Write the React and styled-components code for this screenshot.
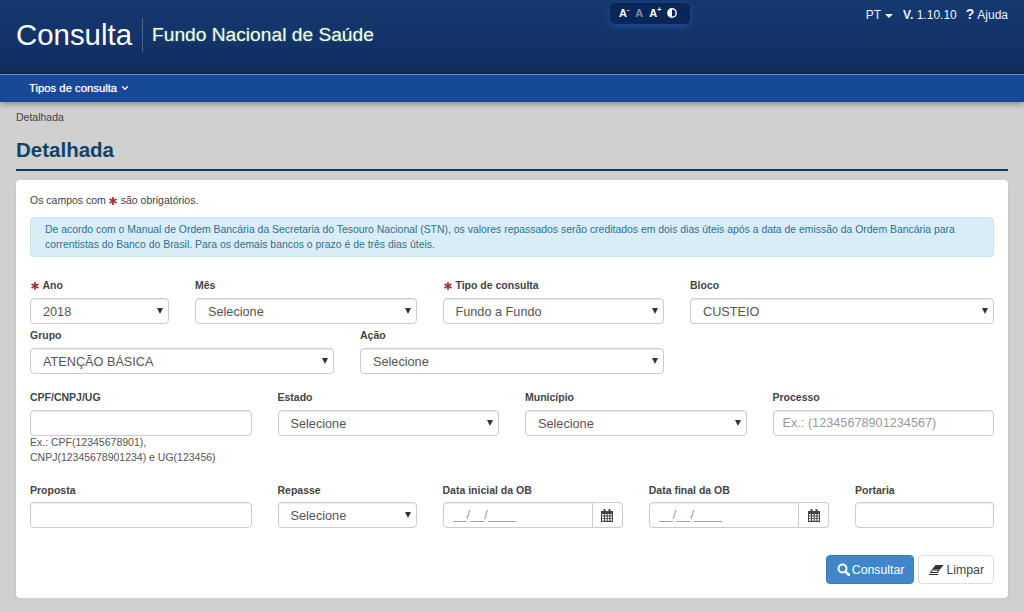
import styled, { createGlobalStyle } from 'styled-components';
import { ChevronDown } from 'lucide-react';

const GlobalStyle = createGlobalStyle`
  * { box-sizing: border-box; }
  html, body { margin: 0; padding: 0; }
  body {
    background: #d0d0d0;
    font-family: "Liberation Sans", Arial, sans-serif;
    font-size: 12px;
    color: #333;
    overflow: hidden;
  }
`;

const Header = styled.header`
  height: 74px;
  padding: 0 16px;
  display: flex;
  align-items: flex-start;
  background: linear-gradient(#15396f, #133268 60%, #102a5a);
  color: #fff;
`;

const Brand = styled.div`
  width: 594px;
  height: 74px;
  display: flex;
  align-items: center;
  padding-bottom: 4px;
`;

const AppName = styled.div`
  font-size: 29.4px;
  line-height: 34px;
  padding-right: 10px;
  margin-right: 9px;
  border-right: 1px solid #47658f;
`;

const AppSubtitle = styled.div`
  font-size: 19.2px;
  color: #f2fff2;
  text-shadow: 0 0 2px rgba(120, 200, 120, 0.6);
`;

const FontTools = styled.div`
  margin-top: 3px;
  width: 80px;
  height: 21px;
  padding: 0 9px 2px;
  display: flex;
  align-items: center;
  gap: 6px;
  border-radius: 5px;
  background: #0a2558;
  box-shadow: 0 2px 7px rgba(40, 90, 170, 0.7);
  font-size: 11px;
  font-weight: bold;
`;

const FontTool = styled.span`
  color: ${props => (props.$muted ? '#7f8fae' : '#fff')};
  sup {
    font-size: 7px;
    line-height: 0;
  }
`;

const TopLinks = styled.div`
  margin-left: auto;
  height: 30px;
  display: flex;
  align-items: center;
  font-size: 12px;
  color: #eef3fb;
`;

const Caret = styled.span`
  display: inline-block;
  margin: 2px 11px 0 4px;
  border-top: 4px solid #eef3fb;
  border-left: 4px solid transparent;
  border-right: 4px solid transparent;
`;

const Version = styled.span`
  margin-right: 9px;
  margin-left: -1px;
  b { font-weight: bold; }
`;

const HelpMark = styled.b`
  font-size: 14px;
  margin: -3px 3px 0 0;
`;

const Nav = styled.nav`
  height: 28px;
  padding: 0 29px 2px;
  display: flex;
  align-items: center;
  gap: 3px;
  background: #174997;
  border-top: 1px solid #6395d6;
  box-shadow: 0 2px 6px rgba(0, 0, 0, 0.35);
  color: #fff;
  font-size: 11.3px;
  text-shadow: 0 0 1px rgba(255, 255, 255, 0.7);
  position: relative;
`;

const Page = styled.main`
  padding: 0 16px;
`;

const Breadcrumb = styled.div`
  padding-top: 9px;
  height: 33px;
  font-size: 10.5px;
  line-height: 12px;
  color: #444;
`;

const Title = styled.h1`
  margin: 0 0 9px;
  height: 36px;
  font-size: 20.5px;
  line-height: 30px;
  font-weight: bold;
  color: #0f4468;
  border-bottom: 2px solid #12385f;
`;

const Card = styled.section`
  height: 418px;
  padding: 13px 14px;
  background: #fff;
  border-radius: 4px;
  box-shadow: 0 1px 2px rgba(0, 0, 0, 0.15);
`;

const Notice = styled.p`
  margin: 0 0 10px;
  font-size: 10.5px;
  line-height: 14px;
  color: #444;
`;

const StarMark = styled.svg`
  display: inline-block;
  width: 8px;
  height: 8px;
  vertical-align: -1px;
  margin: 0 1px 0 ${props => (props.$label ? '1px' : '0')};
  stroke: #a5323a;
  stroke-width: 1.7;
`;

const InfoAlert = styled.div`
  height: 40px;
  margin-bottom: 20px;
  padding: 4px 14px;
  background: #d9edf7;
  border: 1px solid #c8e5f2;
  border-radius: 4px;
  font-size: 10.43px;
  line-height: 15px;
  color: #31708f;
`;

const Row = styled.div`
  display: flex;
  margin: 0 -13px ${props => props.$gap || 0}px;
`;

const Col = styled.div`
  flex: 0 0 ${props => (props.$span / 12) * 100}%;
  padding: 0 13px;
`;

const Label = styled.label`
  display: block;
  height: ${props => (props.$tight ? 20 : 21)}px;
  margin-top: ${props => props.$top || 0}px;
  font-size: 10.5px;
  line-height: 16px;
  font-weight: bold;
  color: #444;
`;

const SelectWrap = styled.div`
  position: relative;
  &::after {
    content: '';
    position: absolute;
    right: 6px;
    top: 10px;
    border-top: 6px solid #333;
    border-left: 3px solid transparent;
    border-right: 3px solid transparent;
  }
`;

const fieldStyles = `
  display: block;
  width: 100%;
  height: 26px;
  padding: 0 12px;
  background: #fff;
  border: 1px solid #ccc;
  border-radius: 4px;
  box-shadow: inset 0 1px 1px rgba(0, 0, 0, 0.075);
  font-family: "Liberation Sans", Arial, sans-serif;
  font-size: 12.7px;
  color: #555;
  outline: none;
`;

const SelectBox = styled.select`
  ${fieldStyles}
  padding-top: 1px;
  appearance: none;
`;

const TextInput = styled.input`
  ${fieldStyles}
  padding: 0 9px;
  &::placeholder {
    color: #999;
    opacity: 1;
  }
`;

const Help = styled.div`
  margin-top: -1px;
  font-size: 10.5px;
  line-height: 15px;
  color: #555;
`;

const InputGroup = styled.div`
  display: flex;
  ${TextInput} {
    flex: 1;
    min-width: 0;
    border-radius: 4px 0 0 4px;
  }
`;

const Addon = styled.span`
  flex: 0 0 30px;
  height: 26px;
  display: flex;
  align-items: center;
  justify-content: center;
  background: #fff;
  border: 1px solid #ccc;
  border-left: 0;
  border-radius: 0 4px 4px 0;
  color: #444;
`;

const Actions = styled.div`
  display: flex;
  justify-content: flex-end;
  gap: 4px;
  margin-top: 27px;
`;

const Button = styled.button`
  height: 29px;
  padding: 0 9px 0 10px;
  display: inline-flex;
  align-items: center;
  gap: 2px;
  border-radius: 4px;
  font-family: "Liberation Sans", Arial, sans-serif;
  font-size: 12.3px;
  background: ${props => (props.$primary ? '#3f86ca' : '#fff')};
  border: 1px solid ${props => (props.$primary ? '#3a7cbb' : '#ddd')};
  color: ${props => (props.$primary ? '#fff' : '#444')};
`;

const Select = ({ value }) => (
  <SelectWrap>
    <SelectBox defaultValue={value}>
      <option>{value}</option>
    </SelectBox>
  </SelectWrap>
);

const Star = ({ label }) => (
  <StarMark viewBox="0 0 8 8" $label={label}>
    <path d="M4 0v8M0.5 2l7 4M0.5 6l7-4" />
  </StarMark>
);

const CalendarIcon = () => (
  <svg width="12" height="13" viewBox="0 0 12 13" fill="#444">
    <rect x="2.5" y="0" width="2" height="3" rx="0.6" />
    <rect x="7.5" y="0" width="2" height="3" rx="0.6" />
    <path d="M0 2h12v11H0zM1 5v1.5h2V5zm3 0v1.5h1.7V5zm2.7 0v1.5h1.7V5zm2.7 0v1.5H11V5zM1 7.4v1.5h2V7.4zm3 0v1.5h1.7V7.4zm2.7 0v1.5h1.7V7.4zm2.7 0v1.5H11V7.4zM1 9.8v1.9h2V9.8zm3 0v1.9h1.7V9.8zm2.7 0v1.9h1.7V9.8zm2.7 0v1.9H11V9.8z" fillRule="evenodd" />
  </svg>
);

const SearchIcon = () => (
  <svg width="13" height="13" viewBox="0 0 13 13" fill="none" stroke="#fff">
    <circle cx="5.5" cy="5.5" r="4" strokeWidth="2" />
    <path d="M8.6 8.6l3.4 3.4" strokeWidth="2.6" strokeLinecap="round" />
  </svg>
);

const EraserIcon = () => (
  <svg width="15" height="10" viewBox="0 0 15 10" fill="#333">
    <path d="M6.5 0H14.5L11 4.5H3z" />
    <path d="M3 4.5h8L8.5 8H0.5zM3.4 5.5L2.4 7h5.5l1.2-1.5z" fillRule="evenodd" />
    <path d="M0 9h9v1H0z" />
  </svg>
);

const ContrastIcon = () => (
  <svg width="10" height="10" viewBox="0 0 10 10">
    <circle cx="5" cy="5" r="4.2" fill="#0a2558" stroke="#fff" strokeWidth="1.4" />
    <path d="M5 1a4 4 0 0 0 0 8z" fill="#fff" />
  </svg>
);

export default function App() {
  return (
    <>
      <GlobalStyle />
      <Header>
        <Brand>
          <AppName>Consulta</AppName>
          <AppSubtitle>Fundo Nacional de Saúde</AppSubtitle>
        </Brand>
        <FontTools>
          <FontTool>A<sup>-</sup></FontTool>
          <FontTool $muted>A</FontTool>
          <FontTool>A<sup>+</sup></FontTool>
          <ContrastIcon />
        </FontTools>
        <TopLinks>
          PT<Caret />
          <Version><b>V.</b> 1.10.10</Version>
          <HelpMark>?</HelpMark>Ajuda
        </TopLinks>
      </Header>
      <Nav>
        Tipos de consulta <ChevronDown size={10} strokeWidth={3} />
      </Nav>
      <Page>
        <Breadcrumb>Detalhada</Breadcrumb>
        <Title>Detalhada</Title>
        <Card>
          <Notice>Os campos com <Star /> são obrigatórios.</Notice>
          <InfoAlert>
            De acordo com o Manual de Ordem Bancária da Secretaria do Tesouro Nacional (STN), os valores repassados serão creditados em dois dias úteis após a data de emissão da Ordem Bancária para correntistas do Banco do Brasil. Para os demais bancos o prazo é de três dias úteis.
          </InfoAlert>
          <Row>
            <Col $span={2}>
              <Label><Star label /> Ano</Label>
              <Select value="2018" />
            </Col>
            <Col $span={3}>
              <Label>Mês</Label>
              <Select value="Selecione" />
            </Col>
            <Col $span={3}>
              <Label><Star label /> Tipo de consulta</Label>
              <Select value="Fundo a Fundo" />
            </Col>
            <Col $span={4}>
              <Label>Bloco</Label>
              <Select value="CUSTEIO" />
            </Col>
          </Row>
          <Row $gap={15}>
            <Col $span={4}>
              <Label $top={3}>Grupo</Label>
              <Select value="ATENÇÃO BÁSICA" />
            </Col>
            <Col $span={4}>
              <Label $top={3}>Ação</Label>
              <Select value="Selecione" />
            </Col>
          </Row>
          <Row $gap={17}>
            <Col $span={3}>
              <Label>CPF/CNPJ/UG</Label>
              <TextInput />
              <Help>Ex.: CPF(12345678901),<br />CNPJ(12345678901234) e UG(123456)</Help>
            </Col>
            <Col $span={3}>
              <Label>Estado</Label>
              <Select value="Selecione" />
            </Col>
            <Col $span={3}>
              <Label>Município</Label>
              <Select value="Selecione" />
            </Col>
            <Col $span={3}>
              <Label>Processo</Label>
              <TextInput placeholder="Ex.: (12345678901234567)" />
            </Col>
          </Row>
          <Row>
            <Col $span={3}>
              <Label $tight>Proposta</Label>
              <TextInput />
            </Col>
            <Col $span={2}>
              <Label $tight>Repasse</Label>
              <Select value="Selecione" />
            </Col>
            <Col $span={2.5}>
              <Label $tight>Data inicial da OB</Label>
              <InputGroup>
                <TextInput placeholder="__/__/____" />
                <Addon><CalendarIcon /></Addon>
              </InputGroup>
            </Col>
            <Col $span={2.5}>
              <Label $tight>Data final da OB</Label>
              <InputGroup>
                <TextInput placeholder="__/__/____" />
                <Addon><CalendarIcon /></Addon>
              </InputGroup>
            </Col>
            <Col $span={2}>
              <Label $tight>Portaria</Label>
              <TextInput />
            </Col>
          </Row>
          <Actions>
            <Button $primary><SearchIcon /> Consultar</Button>
            <Button><EraserIcon /> Limpar</Button>
          </Actions>
        </Card>
      </Page>
    </>
  );
}
